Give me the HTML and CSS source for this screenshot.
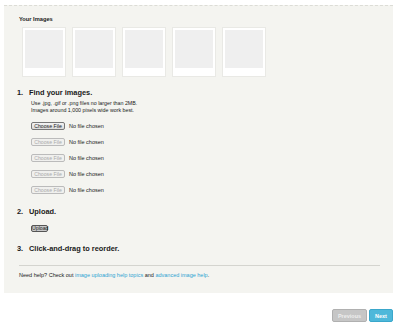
FILE: index.html
```html
<!DOCTYPE html>
<html lang="en">
<head>
    <meta charset="UTF-8">
    <title>Upload images</title>
    <link rel="stylesheet" href="styles.css">
</head>
<body>
    <div class="panel">
        <h4 class="title">Your Images</h4>
        <div class="thumbs">
            <div class="thumb"><div class="thumb-inner"></div></div>
            <div class="thumb"><div class="thumb-inner"></div></div>
            <div class="thumb"><div class="thumb-inner"></div></div>
            <div class="thumb"><div class="thumb-inner"></div></div>
            <div class="thumb"><div class="thumb-inner"></div></div>
        </div>

        <div class="step step-find">
            <h3 class="step-title"><span class="num">1.</span>Find your images.</h3>
            <p class="hint">Use .jpg, .gif or .png files no larger than 2MB.<br>Images around 1,000 pixels wide work best.</p>
            <div class="file-row"><button class="file-btn">Choose File</button><span class="file-name">No file chosen</span></div>
            <div class="file-row"><button class="file-btn" disabled>Choose File</button><span class="file-name">No file chosen</span></div>
            <div class="file-row"><button class="file-btn" disabled>Choose File</button><span class="file-name">No file chosen</span></div>
            <div class="file-row"><button class="file-btn" disabled>Choose File</button><span class="file-name">No file chosen</span></div>
            <div class="file-row"><button class="file-btn" disabled>Choose File</button><span class="file-name">No file chosen</span></div>
        </div>

        <div class="step step-upload">
            <h3 class="step-title"><span class="num">2.</span>Upload.</h3>
            <button class="upload-btn">Upload</button>
        </div>

        <div class="step step-order">
            <h3 class="step-title"><span class="num">3.</span>Click-and-drag to reorder.</h3>
        </div>

        <p class="help">Need help? Check out <a href="#">image uploading help topics</a> and <a href="#">advanced image help</a>.</p>
    </div>

    <div class="nav">
        <button class="nav-btn prev">Previous</button>
        <button class="nav-btn next">Next</button>
    </div>
</body>
</html>
```

FILE: styles.css
```css
*{
    padding:0;
    margin:0;
    box-sizing:border-box;
}
body{
    background:#fff;
    font-family:"Liberation Sans", Arial, sans-serif;
    color:#1a1a1a;
}
button{
    padding:0;
    font-family:inherit;
}
.panel{
    margin:5px 7px 0 4px;
    background:#f4f4f0;
    border-top:1px dashed #dcdcd6;
    padding:10px 13px 14px 15px;
}
.title{
    font-size:5.7px;
    font-weight:bold;
    line-height:7px;
}
.thumbs{
    display:flex;
    gap:6px;
    margin:4px 0 0 3px;
}
.thumb{
    width:44px;
    height:50px;
    background:#fff;
    border:1px solid #e9e9e5;
    padding:2px 2px 8px;
}
.thumb-inner{
    width:100%;
    height:100%;
    background:#efefef;
}
.step-title{
    display:flex;
    font-size:7.4px;
    font-weight:bold;
    line-height:9px;
    margin-left:-2px;
}
.num{
    width:12px;
}
.step-find{
    margin-top:11px;
}
.hint{
    font-size:5.3px;
    line-height:7px;
    margin:3px 0 0 12px;
}
.file-row{
    display:flex;
    align-items:center;
    height:16px;
    margin-left:12px;
}
.step-find .file-row:first-of-type{
    margin-top:4px;
}
.file-btn{
    font-size:5.2px;
    width:34px;
    height:8px;
    line-height:6px;
    border:1px solid #777;
    border-radius:2px;
    background:linear-gradient(#f4f4f4,#dadada);
    color:#222;
}
.file-btn:disabled{
    border-color:#bbb;
    color:#aaa;
    background:#f0f0ee;
}
.file-name{
    font-size:5.5px;
    margin-left:4px;
}
.step-upload{
    margin-top:9px;
}
.upload-btn{
    font-size:5.2px;
    width:17px;
    height:7px;
    line-height:5px;
    margin:1px 0 0 12px;
    border:1px solid #555;
    border-radius:2px;
    background:#c9c9c9;
    color:#222;
}
.step-order{
    margin-top:10px;
}
.help{
    border-top:1px solid #d4d4cf;
    margin-top:12px;
    padding-top:6px;
    font-size:5.5px;
    line-height:7px;
}
.help a{
    color:#2da3d2;
    text-decoration:none;
}
.nav{
    display:flex;
    justify-content:flex-end;
    gap:2px;
    margin:16px 7px 0 0;
}
.nav-btn{
    font-size:5.5px;
    font-weight:bold;
    height:13px;
    border-radius:2px;
    color:#fff;
}
.prev{
    width:35px;
    background:#c6c6c6;
    border:1px solid #b0b0b0;
    color:#eee;
}
.next{
    width:24px;
    background:#4eb8da;
    border:1px solid #3aa7cb;
}
```
